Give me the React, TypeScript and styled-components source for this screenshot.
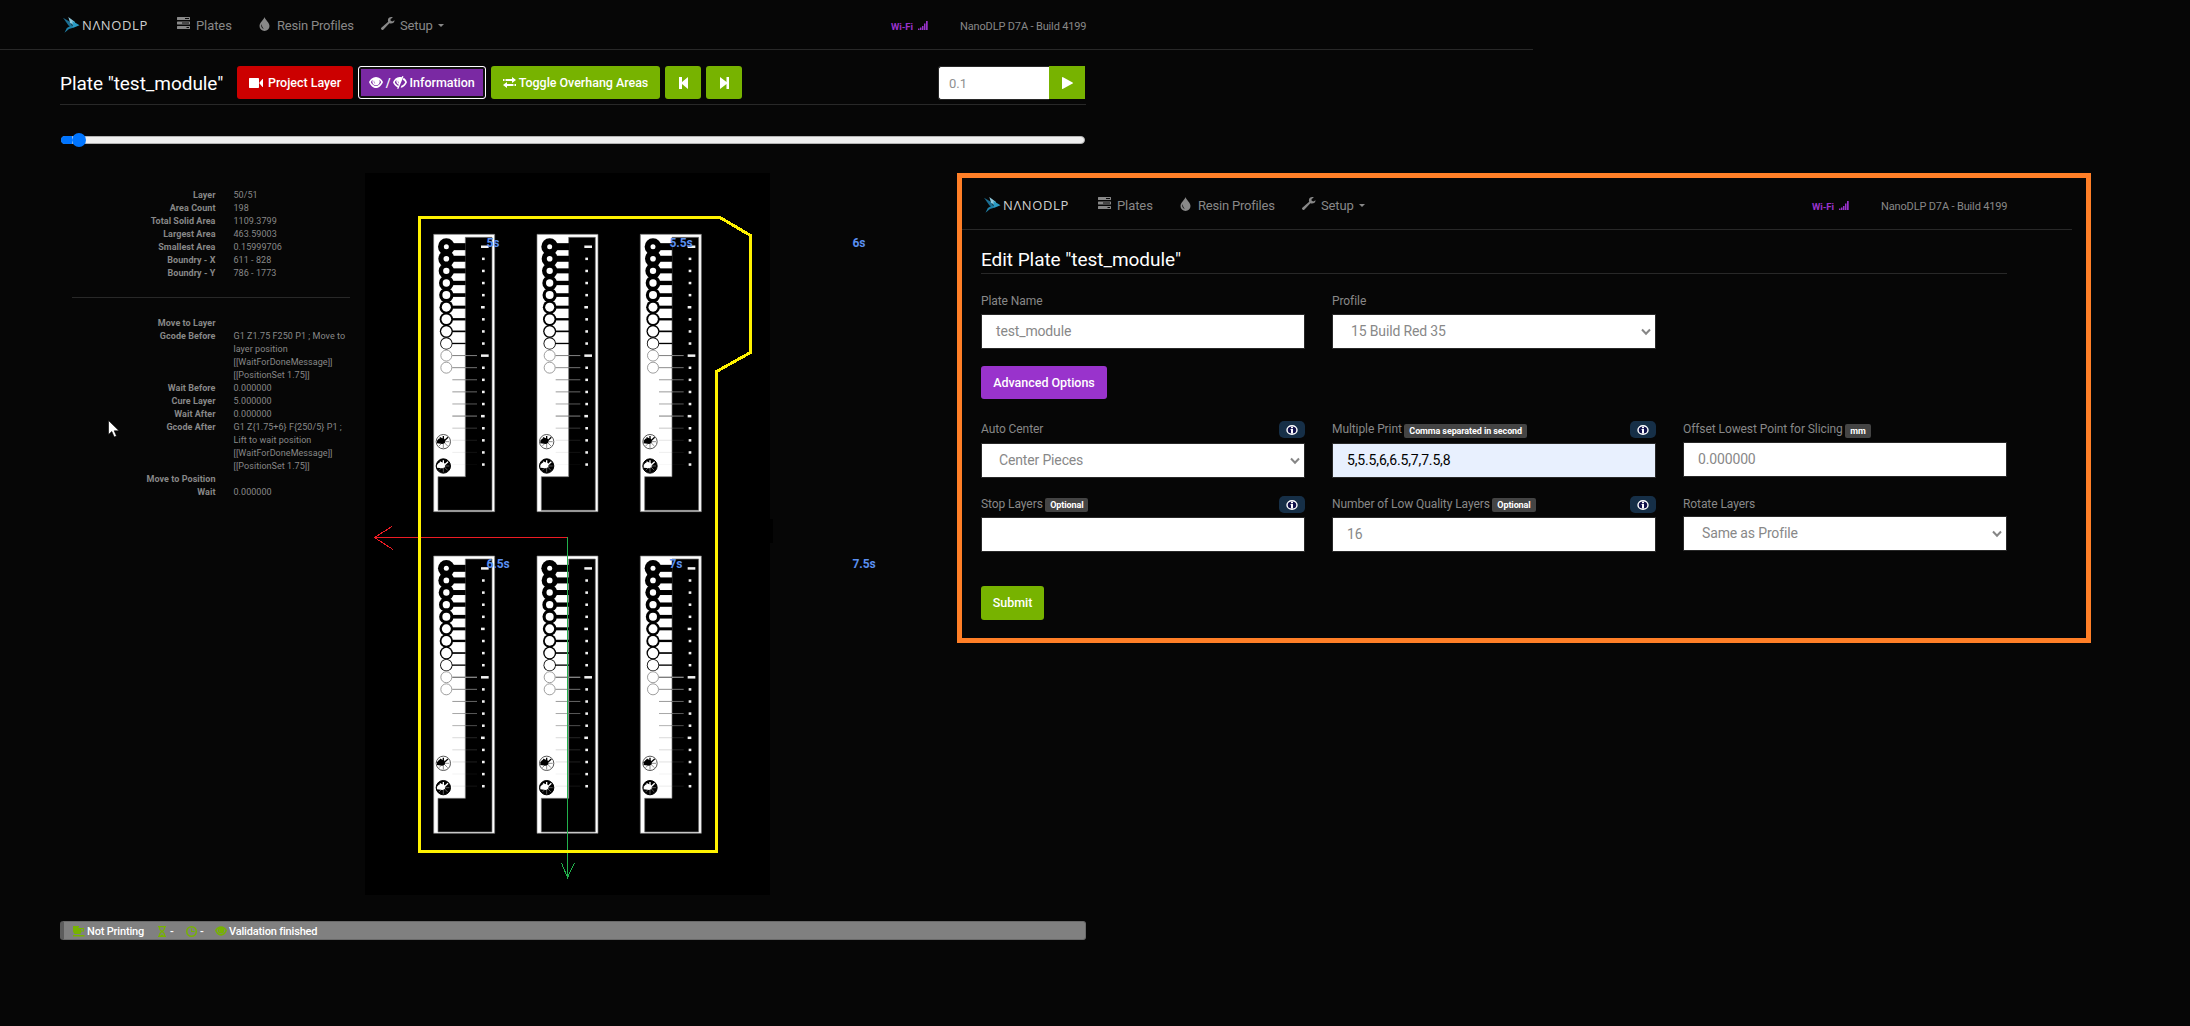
import React from "react";
import styled, { createGlobalStyle } from "styled-components";

const GlobalStyle = createGlobalStyle`
  * { box-sizing: border-box; }
  body {
    margin: 0;
    background: #060606;
    color: #888;
    font-family: Roboto, "Liberation Sans", sans-serif;
    overflow: hidden;
  }
`;

/* ---------- icons ---------- */

const Svg = styled.svg`
  display: block;
  flex: none;
  fill: currentColor;
`;

type IconProps = { w?: number; h?: number };

const TasksIcon = ({ w = 13, h = 12 }: IconProps) => (
  <Svg width={w} height={h} viewBox="0 0 13 12">
    <path
      fillRule="evenodd"
      d="M0 .5Q0 0 .5 0h12q.5 0 .5.5v2q0 .5-.5.5H.5Q0 3 0 2.500ZM8 1v1h4V1ZM0 5q0-.5.5-.5h12q.5 0 .5.5v2q0 .5-.5.5H.5Q0 7.500 0 7ZM5 5.500v1h7v-1ZM0 9.500Q0 9 .5 9h12q.5 0 .5.5v2q0 .5-.5.5H.5Q0 12 0 11.500ZM9.500 10v1H12v-1Z"
    />
  </Svg>
);

const DropIcon = () => (
  <Svg width={11} height={14} viewBox="0 0 11 14">
    <path
      fillRule="evenodd"
      d="M5.500 0C6 2.500 10.500 5.500 10.500 9a5 5 0 0 1-10 0C.5 5.500 5 2.500 5.500 0ZM2.600 7C1.700 9.500 2.800 11.500 4.800 12 3.300 10.500 3 9 2.600 7Z"
    />
  </Svg>
);

const WrenchIcon = () => (
  <Svg width={14} height={13} viewBox="0 0 14 13">
    <path d="M13.600 3.200 11.200 4.500 9.500 3.500 9.600 2 11.800.400C9.600-.5 7 .8 6.900 3.200c0 .6.100 1 .3 1.500L.6 10.400c-.8.700-.8 1.500-.2 2.100.6.600 1.500.6 2.100-.1l5.900-6.100c2.600.9 5.200-.6 5.200-3.100Z" />
  </Svg>
);

const VideoIcon = () => (
  <Svg width={14} height={10} viewBox="0 0 14 10">
    <path d="M.5 0h8.700q.8 0 .8.800v8.400q0 .8-.8.800H.5q-.5 0-.5-.8V.8Q0 0 .5 0ZM10.500 4.500 13.500 1q.5-.3.5.2v7.600q0 .5-.5.2l-3-3.500Z" />
  </Svg>
);

const EyeIcon = ({ w = 14, h = 11 }: IconProps) => (
  <Svg width={w} height={h} viewBox="0 0 14 11">
    <path
      fillRule="evenodd"
      d="M7 0c3.200 0 5.700 2.200 7 5-1.300 3.300-3.800 6-7 6S1.300 8.300 0 5C1.300 2.200 3.800 0 7 0ZM1.900 5.200C2.900 7.200 4.800 8.900 7 8.900s4.100-1.700 5.100-3.700C11.700 4.200 11 3.300 10.200 2.700c.3.600.5 1.200.5 1.800A3.700 3.700 0 0 1 7 8.200a3.700 3.700 0 0 1-3.700-3.700c0-.6.200-1.200.5-1.800C3 3.300 2.300 4.200 1.900 5.200ZM5 3.200c-.6 1.200-.2 3 1.400 3.600-.9-1-1.300-2.200-1.400-3.600Z"
    />
  </Svg>
);

const EyeClosedIcon = () => (
  <Svg width={14} height={13} viewBox="0 0 14 13">
    <path
      fillRule="evenodd"
      d="M6.500 1c.8 0 1.500.1 2.200.3L9.300 0l1.200.5L5.300 13l-1.200-.5.500-1.200C2.500 10.400.9 8.500 0 6.200 1.200 3.300 3.500 1 6.500 1ZM3.500 4C2.700 4.600 2.100 5.400 1.800 6.200c.7 1.600 2 2.900 3.600 3.500l.4-1A3.600 3.600 0 0 1 3.500 4ZM5 4.500c-.5 1.200-.1 2.500 1 3.100-.6-1-.9-2-1-3.100ZM10.600 1.700c1.500.9 2.700 2.600 3.400 4.500-1.200 2.900-3.500 5.200-6.300 5.600l.7-2c1.700-.5 2.900-1.900 3.800-3.600-.5-1.200-1.400-2-2.500-2.500Z"
    />
  </Svg>
);

const TransferIcon = () => (
  <Svg width={13} height={11} viewBox="0 0 13 11">
    <path d="M3 2h6V0l4 3-4 3V4H3ZM0 2h1v2H0ZM1.500 2h1v2h-1ZM10 7H4V5L0 8l4 3V9h6ZM12 7h1v2h-1ZM10.500 7h1v2h-1Z" />
  </Svg>
);

const StepBackIcon = () => (
  <Svg width={9} height={12} viewBox="0 0 9 12">
    <path d="M0 0h3v5l6-5v12L3 7v5H0Z" />
  </Svg>
);

const StepForwardIcon = () => (
  <Svg width={9} height={12} viewBox="0 0 9 12">
    <path d="M9 0H6.500v5L0 0v12l6.500-5v5H9Z" />
  </Svg>
);

const PlayIcon = () => (
  <Svg width={11} height={12} viewBox="0 0 11 12">
    <path d="M0 .5Q0-.2.6.1l10 5.400q.6.500 0 .9l-10 5.500Q0 12.200 0 11.500Z" />
  </Svg>
);

const SignalIcon = () => (
  <Svg width={10} height={9} viewBox="0 0 10 9">
    <path d="M0 7.500h1.500V9H0ZM2 6.500h1.500V9H2ZM4 5h1.500v4H4ZM6 2.500h1.500V9H6ZM8 0h1.700v9H8Z" />
  </Svg>
);

const MugIcon = () => (
  <Svg width={12} height={11} viewBox="0 0 12 11">
    <path fillRule="evenodd" d="M0 0h6v1H5.500v1H11v3.500H8.500L7.500 8H1.500L0 5.500ZM8 3v1.500h2V3ZM0 9h11.500v1.500H0Z" />
  </Svg>
);

const HourglassIcon = () => (
  <Svg width={8} height={11} viewBox="0 0 8 11">
    <path
      fillRule="evenodd"
      d="M0 0h8v1.300H7.200C7.200 3.200 6.400 4.500 5 5.500 6.400 6.500 7.200 7.800 7.200 9.700H8V11H0V9.700h.8C.8 7.800 1.600 6.500 3 5.500 1.600 4.500.8 3.200.8 1.300H0ZM2 1.300c0 1.800.8 2.700 2 3.500 1.200-.8 2-1.700 2-3.500ZM2 9.700l2-1.500 2 1.500c0-1.600-.8-2.700-2-3.500-1.200.8-2 1.900-2 3.500Z"
    />
  </Svg>
);

const ClockIcon = () => (
  <Svg width={11} height={11} viewBox="0 0 11 11">
    <path
      fillRule="evenodd"
      d="M5.500 0a5.500 5.500 0 1 1 0 11 5.500 5.500 0 0 1 0-11ZM5.500 1.500a4 4 0 1 0 0 8 4 4 0 0 0 0-8ZM5 2.500h1V5h2.500v1H5Z"
    />
  </Svg>
);

const InfoIcon = () => (
  <Svg width={12} height={10} viewBox="0 0 12 10">
    <ellipse cx="6" cy="5" rx="5" ry="4.300" fill="#10104a" stroke="#fff" strokeWidth="1.400" />
    <path fill="#fff" d="M5 1.800h2v1.400H5ZM4.600 4H7v4.600H5V5h-.4Z" />
  </Svg>
);

const ChevronIcon = () => (
  <Svg width={10} height={8} viewBox="0 0 10 8">
    <path d="M1 1.500 5 5.700l4-4.200" fill="none" stroke="#868686" strokeWidth="2" />
  </Svg>
);

const BirdIcon = () => (
  <Svg width={17} height={16} viewBox="0 0 17 16">
    <path fill="#1c6f93" d="M0 .8 8 5.500l1.500 5L5.500 8.500Z" />
    <path fill="#8fc9dd" d="M5.300 0 12 5l-.5 4L7 5.500Z" />
    <path fill="#2b9bc4" d="M9.500 4 16.500 8.200 11 10.500 7 11l2.500-2Z" />
    <path fill="#1f7fa6" d="M11 10.500 6 12 1.500 15.800 3.800 11 8 8.500Z" />
  </Svg>
);

/* ---------- navigation ---------- */

const Nav = styled.nav<{ $width: number; $height: number; $left: number }>`
  display: flex;
  width: ${(p) => p.$width}px;
  height: ${(p) => p.$height}px;
  padding: ${(p) => p.$height - 50}px 0 0 ${(p) => p.$left}px;
  border-bottom: 1px solid #282828;
`;

const Brand = styled.div`
  display: flex;
  gap: 2px;
  width: 114px;
  padding-top: 17px;
`;

const BrandName = styled.span`
  color: #cfcfcf;
  font: 400 13px/15px "Open Sans", sans-serif;
  letter-spacing: 0.62px;
  padding-top: 1px;
`;

const NavItem = styled.a<{ $width: number; $gap: number; $spacing?: number }>`
  display: flex;
  width: ${(p) => p.$width}px;
  gap: ${(p) => p.$gap}px;
  padding-top: 17px;
  font-size: 13px;
  line-height: 17px;
  letter-spacing: ${(p) => p.$spacing ?? -0.08}px;
  white-space: nowrap;
`;

const Caret = styled.i`
  width: 0;
  height: 0;
  margin-top: 7px;
  border: 3.500px solid transparent;
  border-top-color: currentColor;
  border-bottom: 0;
`;

const Wifi = styled.div`
  display: flex;
  gap: 5px;
  width: 69px;
  padding-top: 21px;
  color: #9933cc;
  font-size: 9.500px;
  font-weight: 700;
  line-height: 12px;
  letter-spacing: -0.1px;
`;

const Build = styled.div`
  padding-top: 20px;
  font-size: 11px;
  line-height: 13px;
  letter-spacing: -0.15px;
  white-space: nowrap;
`;

function NavBar(p: { width: number; height: number; left: number }) {
  return (
    <Nav $width={p.width} $height={p.height} $left={p.left}>
      <Brand>
        <BirdIcon />
        <BrandName>NΛNODLP</BrandName>
      </Brand>
      <NavItem $width={82} $gap={6}>
        <TasksIcon />
        Plates
      </NavItem>
      <NavItem $width={122} $gap={7} $spacing={-0.2}>
        <DropIcon />
        Resin Profiles
      </NavItem>
      <NavItem $width={510} $gap={5} $spacing={-0.15}>
        <WrenchIcon />
        Setup
        <Caret />
      </NavItem>
      <Wifi>
        Wi-Fi
        <SignalIcon />
      </Wifi>
      <Build>NanoDLP D7A - Build 4199</Build>
    </Nav>
  );
}

/* ---------- plate toolbar ---------- */

const Page = styled.div`
  display: flex;
  flex-direction: column;
  width: 2190px;
  height: 1026px;
`;

const Toolbar = styled.header`
  display: flex;
  width: 1026px;
  height: 55px;
  margin-left: 60px;
  padding-top: 16px;
  border-bottom: 1px solid #282828;
`;

const Title = styled.h1`
  margin: 0;
  color: #fff;
  font-size: 19px;
  font-weight: 400;
  line-height: 35px;
  letter-spacing: -0.05px;
  white-space: nowrap;
`;

const ToolbarTitle = styled(Title)`
  width: 177px;
`;

const Button = styled.button<{ $bg: string; $width: number; $height?: number; $square?: boolean }>`
  display: flex;
  align-items: center;
  justify-content: center;
  gap: 5px;
  width: ${(p) => p.$width}px;
  height: ${(p) => p.$height ?? 33}px;
  padding: 0;
  border: 0;
  border-radius: ${(p) => (p.$square ? 0 : 3)}px;
  background: ${(p) => p.$bg};
  color: #fff;
  font: 500 12.500px/14px Roboto, sans-serif;
  letter-spacing: -0.03px;
  white-space: nowrap;
`;

const ToolButton = styled(Button)`
  margin-right: 5px;
`;

const ToggleButton = styled(ToolButton)`
  gap: 3px;
`;

const FocusedButton = styled(ToolButton)`
  gap: 2.500px;
  border: 1px solid #fff;
  box-shadow: inset 0 0 0 2px #101010;
`;

const SpeedGroup = styled.div`
  display: flex;
  margin-left: auto;
  margin-right: 1px;
`;

const SpeedInput = styled.div`
  width: 111px;
  height: 34px;
  padding-left: 10px;
  border: 1px solid #282828;
  border-right: 0;
  border-radius: 3px 0 0 3px;
  background: #fff;
  color: #909090;
  font-size: 13px;
  line-height: 34px;
`;

const SliderRow = styled.div`
  width: 1026px;
  height: 68px;
  margin-left: 60px;
  padding: 28px 1px 0;
`;

const SliderTrack = styled.div`
  display: flex;
  align-items: center;
  height: 8px;
  margin-top: 3px;
  border: 1px solid #b2b2b2;
  border-radius: 4px;
  background: #efefef;
`;

const SliderFill = styled.div`
  width: 11px;
  height: 8px;
  margin-left: -1px;
  border-radius: 4px 0 0 4px;
  background: #0075ff;
`;

const SliderThumb = styled.div`
  width: 14px;
  height: 14px;
  border-radius: 50%;
  background: #0075ff;
`;

/* ---------- layer information ---------- */

const Content = styled.main`
  display: flex;
  height: 748px;
  margin-left: 60px;
`;

const Info = styled.section`
  width: 305px;
  padding-top: 16px;
  font-size: 9px;
  line-height: 13px;
  letter-spacing: 0.05px;
`;

const InfoRow = styled.div`
  display: flex;
  gap: 18px;
`;

const InfoLabel = styled.div`
  width: 155.500px;
  font-weight: 700;
  text-align: right;
`;

const InfoValue = styled.div`
  white-space: pre;
`;

const Divider = styled.hr`
  width: 278px;
  height: 1px;
  margin: 17px 0 19px 12px;
  border: 0;
  background: #282828;
`;

const Cursor = styled.svg`
  position: absolute;
  left: 108px;
  top: 420px;
`;

const summary: [string, string][] = [
  ["Layer", "50/51"],
  ["Area Count", "198"],
  ["Total Solid Area", "1109.3799"],
  ["Largest Area", "463.59003"],
  ["Smallest Area", "0.15999706"],
  ["Boundry - X", "611 - 828"],
  ["Boundry - Y", "786 - 1773"],
];

const moves: [string, string][] = [
  ["Move to Layer", ""],
  ["Gcode Before", "G1 Z1.75 F250 P1 ; Move to\nlayer position\n[[WaitForDoneMessage]]\n[[PositionSet 1.75]]"],
  ["Wait Before", "0.000000"],
  ["Cure Layer", "5.000000"],
  ["Wait After", "0.000000"],
  ["Gcode After", "G1 Z{1.75+6} F{250/5} P1 ;\nLift to wait position\n[[WaitForDoneMessage]]\n[[PositionSet 1.75]]"],
  ["Move to Position", ""],
  ["Wait", "0.000000"],
];

const InfoTable = ({ rows }: { rows: [string, string][] }) => (
  <>
    {rows.map(([label, value]) => (
      <InfoRow key={label}>
        <InfoLabel>{label}</InfoLabel>
        <InfoValue>{value}</InfoValue>
      </InfoRow>
    ))}
  </>
);

/* ---------- layer preview ---------- */

const Stage = styled.section`
  position: relative;
  width: 580px;
`;

const TimeLabel = styled.span<{ $x: number; $y: number }>`
  position: absolute;
  left: ${(p) => p.$x}px;
  top: ${(p) => p.$y}px;
  color: #5a8ff0;
  font-size: 12px;
  font-weight: 700;
  line-height: 14px;
  letter-spacing: -0.1px;
`;

/* One calibration strip, drawn in thirds of a pixel: ring radius, hole radius, bar height. */
const RINGS: [number, number, number][] = [
  [25, 7.5, 21], [24, 8.5, 18], [23, 9.5, 15], [22, 11, 13], [21.5, 12, 11],
  [20.5, 13.5, 9], [20, 14.5, 7], [19.5, 15.5, 5], [18.5, 16, 4],
];
const LINE_FADE = [0.5, 0.45, 0.4, 0.4, 0.35, 0.5, 0.22, 0.1, 0.07, 0.03];
const LINE_FADE_SOFT = [0.7, 0.45, 0.4, 0.35, 0.3, 0.15, 0.15, 0.12, 0.05, 0.08];

function Star({ y, inverse }: { y: number; inverse?: boolean }) {
  return (
    <g transform={`translate(30 ${y})`}>
      <circle r="21.500" fill={inverse ? "#000" : "#fff"} stroke={inverse ? "#000" : "#555"} strokeWidth="3" />
      <path stroke={inverse ? "#888" : "#555"} strokeWidth="2" d="M0 0V19M0 0H18M0 0 13 13M0 0-13 13" />
      <path
        stroke={inverse ? "#fff" : "#000"}
        strokeWidth="4"
        d="M0 0V-17M0 0-10-13M0 0 14-13"
      />
      <path fill={inverse ? "#fff" : "#000"} d="M5 3-2 7-19 5V-3L-14-9-6-12 4-8Z" />
    </g>
  );
}

function Strip({ x, y, soft }: { x: number; y: number; soft?: boolean }) {
  const step = 36.3;
  return (
    <g transform={`translate(${x} ${y})`}>
      <path
        fill="#fff"
        fillRule="evenodd"
        stroke="#777"
        strokeWidth="2"
        d="M1 1H184V833H1ZM96 10H176V829H14V728H96Z"
      />
      {RINGS.map(([r, , bar], i) => (
        <g key={i}>
          <rect x="39" y={38 + i * step - bar / 2} width="58" height={bar} />
          <circle cx="39" cy={38 + i * step} r={r} />
        </g>
      ))}
      {RINGS.map(([, hole], i) => (
        <circle key={i} cx="39" cy={38 + i * step} r={hole} fill="#fff" />
      ))}
      {(soft ? LINE_FADE_SOFT : LINE_FADE).map((fade, i) => {
        const ly = 38 + (i + 9) * step;
        return (
          <g key={i}>
            {i < 2 && <circle cx="39" cy={ly} r="16.500" fill="#fff" stroke="#8a8a8a" strokeWidth="2.500" />}
            <rect x="57" y={ly - 1.5} width="39" height="3" fill="#000" opacity={fade} />
            <rect x="96" y={ly - 1.5} width="35" height="3" fill="#fff" opacity={fade} />
          </g>
        );
      })}
      {Array.from({ length: 19 }, (_, i) => {
        const long = i === 0 || i === 9;
        const mid = i === 5 || i === 14;
        return (
          <rect
            key={i}
            x={long || mid ? 143 : 146}
            y={34.5 + i * step}
            width={long ? 23 : mid ? 11 : 8}
            height="7.500"
            fill="#f2f2f2"
          />
        );
      })}
      <Star y={623} />
      <Star y={696} inverse />
    </g>
  );
}

const Preview = () => (
  <Stage>
    <svg width="580" height="722" viewBox="365 173 580 722" display="block">
      <rect x="365" y="173" width="405" height="722" fill="#000" />
      <rect x="368" y="519" width="405" height="24" fill="#000" />
      <g transform="translate(360 170) scale(.33333)">
        {[220, 530, 840].map((x) => (
          <React.Fragment key={x}>
            <Strip x={x} y={192} />
            <Strip x={x} y={1157} soft />
          </React.Fragment>
        ))}
      </g>
      <g fill="none" shapeRendering="crispEdges">
        <path stroke="#ed1c24" d="M568 537.500H374.500M392 526.500 374.500 537.500 393 549.500" />
        <path stroke="#22b14c" d="M567.500 537V877M561.500 863 567.500 877.500 574.500 863" />
        <path
          stroke="#fff200"
          strokeWidth="3"
          d="M419.500 217.500H720L750.500 235.500V352.500L716.500 371.500V851.500H419.500Z"
        />
      </g>
    </svg>
    <TimeLabel $x={121.5} $y={63}>5s</TimeLabel>
    <TimeLabel $x={304.5} $y={63}>5.5s</TimeLabel>
    <TimeLabel $x={487.5} $y={63}>6s</TimeLabel>
    <TimeLabel $x={121.5} $y={384}>6.5s</TimeLabel>
    <TimeLabel $x={304.5} $y={384}>7s</TimeLabel>
    <TimeLabel $x={487.5} $y={384}>7.5s</TimeLabel>
  </Stage>
);

/* ---------- edit form ---------- */

const Panel = styled.section`
  width: 1134px;
  height: 470px;
  margin-left: 12px;
  border: 5px solid #ff7f27;
  background: #060606;
`;

const Form = styled.form`
  width: 1045px;
  padding-left: 19px;
`;

const FormTitle = styled(Title)`
  height: 44px;
  padding-top: 12px;
  border-bottom: 1px solid #282828;
`;

const Row = styled.div<{ $top: number }>`
  display: grid;
  grid-template-columns: repeat(3, 324px);
  column-gap: 27px;
  align-items: start;
  margin-top: ${(p) => p.$top}px;
`;

const LabelLine = styled.div<{ $height: number }>`
  display: flex;
  align-items: flex-start;
  gap: 2.500px;
  height: ${(p) => p.$height}px;
  font-size: 12px;
  line-height: 18px;
  letter-spacing: -0.08px;
  white-space: nowrap;
`;

const Tag = styled.span<{ $top: number }>`
  height: 14px;
  margin-top: ${(p) => p.$top}px;
  padding: 0 5px;
  border-radius: 2px;
  background: #444;
  color: #fff;
  font-size: 9px;
  font-weight: 700;
  line-height: 14px;
  letter-spacing: -0.1px;
`;

const InfoBadge = styled.span`
  display: flex;
  align-items: center;
  justify-content: center;
  width: 26px;
  height: 17px;
  margin: 1px 0 0 auto;
  border-radius: 5px;
  background: #162f47;
`;

const Control = styled.div<{ $filled?: boolean; $indent: number }>`
  display: flex;
  align-items: center;
  justify-content: space-between;
  height: 35px;
  padding: 0 4px 0 ${(p) => p.$indent}px;
  border: 1px solid #282828;
  background: ${(p) => (p.$filled ? "#e8f0fe" : "#fff")};
  color: ${(p) => (p.$filled ? "#000" : "#888")};
  font-size: 14px;
  line-height: 17px;
  letter-spacing: -0.15px;
`;

type FieldProps = {
  label: string;
  value: string;
  labelHeight: number;
  tag?: string;
  tagTop?: number;
  info?: boolean;
  select?: boolean;
  filled?: boolean;
  indent?: number;
};

const Field = (p: FieldProps) => (
  <div>
    <LabelLine $height={p.labelHeight}>
      {p.label}
      {p.tag && <Tag $top={p.tagTop ?? 4}>{p.tag}</Tag>}
      {p.info && (
        <InfoBadge>
          <InfoIcon />
        </InfoBadge>
      )}
    </LabelLine>
    <Control $filled={p.filled} $indent={p.indent ?? (p.select ? 18 : 14)}>
      <span>{p.value}</span>
      {p.select && <ChevronIcon />}
    </Control>
  </div>
);

const AdvancedButton = styled(Button)`
  margin-top: 17px;
`;

const SubmitButton = styled(Button)`
  margin-top: 34px;
  padding-bottom: 1px;
`;

const EditPanel = () => (
  <Panel>
    <NavBar width={1110} height={52} left={22} />
    <Form>
      <FormTitle>Edit Plate "test_module"</FormTitle>
      <Row $top={18}>
        <Field label="Plate Name" value="test_module" labelHeight={22} />
        <Field label="Profile" value="15 Build Red 35" labelHeight={22} select />
      </Row>
      <AdvancedButton type="button" $bg="#9933cc" $width={126}>
        Advanced Options
      </AdvancedButton>
      <Row $top={21}>
        <Field label="Auto Center" value="Center Pieces" labelHeight={23} info select indent={17} />
        <Field
          label="Multiple Print"
          tag="Comma separated in second"
          value="5,5.5,6,6.5,7,7.5,8"
          labelHeight={23}
          info
          filled
        />
        <Field label="Offset Lowest Point for Slicing" tag="mm" value="0.000000" labelHeight={22} />
      </Row>
      <Row $top={17}>
        <Field label="Stop Layers" tag="Optional" tagTop={3} value="" labelHeight={22} info />
        <Field
          label="Number of Low Quality Layers"
          tag="Optional"
          tagTop={3}
          value="16"
          labelHeight={22}
          info
        />
        <Field label="Rotate Layers" value="Same as Profile" labelHeight={21} select />
      </Row>
      <SubmitButton type="button" $bg="#77b300" $width={63} $height={34}>
        Submit
      </SubmitButton>
    </Form>
  </Panel>
);

/* ---------- status bar ---------- */

const StatusBar = styled.footer`
  display: flex;
  align-items: center;
  width: 1026px;
  height: 19px;
  margin-left: 60px;
  padding: 1px 0 0 9px;
  border: 1px solid #6a6a6a;
  border-left: 4px solid #5c5c5c;
  border-radius: 3px;
  background: #808080;
  color: #fff;
  font-size: 11px;
  font-weight: 500;
  letter-spacing: -0.17px;
`;

const Status = styled.span<{ $width: number; $gap: number }>`
  display: flex;
  align-items: center;
  gap: ${(p) => p.$gap}px;
  width: ${(p) => p.$width}px;
  white-space: nowrap;

  svg {
    color: #77b300;
  }
`;

export default function App() {
  return (
    <Page>
      <GlobalStyle />
      <NavBar width={1533} height={50} left={63} />
      <Toolbar>
        <ToolbarTitle>Plate "test_module"</ToolbarTitle>
        <ToolButton $bg="#cc0000" $width={116}>
          <VideoIcon />
          Project Layer
        </ToolButton>
        <FocusedButton $bg="#7a29a3" $width={128}>
          <EyeIcon />/<EyeClosedIcon />
          Information
        </FocusedButton>
        <ToggleButton $bg="#77b300" $width={169}>
          <TransferIcon />
          Toggle Overhang Areas
        </ToggleButton>
        <ToolButton $bg="#77b300" $width={36}>
          <StepBackIcon />
        </ToolButton>
        <ToolButton $bg="#77b300" $width={36}>
          <StepForwardIcon />
        </ToolButton>
        <SpeedGroup>
          <SpeedInput>0.1</SpeedInput>
          <Button $bg="#77b300" $width={36} $square>
            <PlayIcon />
          </Button>
        </SpeedGroup>
      </Toolbar>
      <SliderRow>
        <SliderTrack>
          <SliderFill />
          <SliderThumb />
        </SliderTrack>
      </SliderRow>
      <Content>
        <Info>
          <InfoTable rows={summary} />
          <Divider />
          <InfoTable rows={moves} />
        </Info>
        <Preview />
        <EditPanel />
      </Content>
      <StatusBar>
        <Status $width={85} $gap={2}>
          <MugIcon />
          Not Printing
        </Status>
        <Status $width={28} $gap={4}>
          <HourglassIcon />-
        </Status>
        <Status $width={29} $gap={3}>
          <ClockIcon />-
        </Status>
        <Status $width={110} $gap={2}>
          <EyeIcon w={12} h={10} />
          Validation finished
        </Status>
      </StatusBar>
      <Cursor width="12" height="18" viewBox="0 0 12 18">
        <path d="M.5.5V14.500L3.800 11.500 6.200 17 8.500 16 6.200 10.800H11Z" fill="#fff" stroke="#000" strokeWidth=".6" />
      </Cursor>
    </Page>
  );
}
